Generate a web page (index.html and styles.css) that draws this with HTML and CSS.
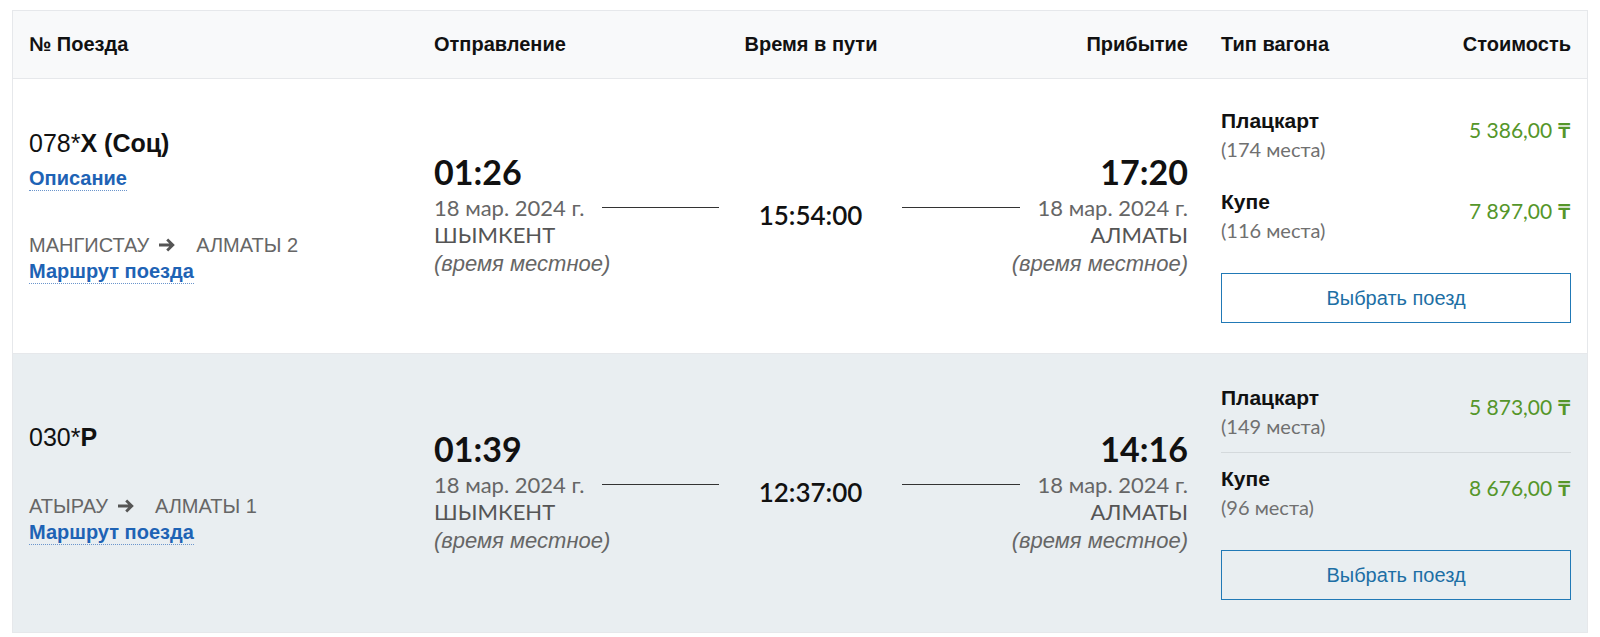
FILE: index.html
```html
<!DOCTYPE html>
<html lang="ru">
<head>
    <meta charset="UTF-8">
    <meta name="viewport" content="width=device-width, initial-scale=1.0">
    <title>Поезда</title>
    <link rel="stylesheet" href="styles.css">
</head>
<body>
    <div class="trains">
        <div class="trains-head">
            <div>№ Поезда</div>
            <div class="head-trip">
                <span>Отправление</span>
                <span class="center">Время в пути</span>
                <span class="right">Прибытие</span>
            </div>
            <div class="head-cars">
                <span>Тип вагона</span>
                <span>Стоимость</span>
            </div>
        </div>

        <div class="train-row">
            <div class="train-info">
                <div class="train-top">
                    <div class="train-number">078*<b>X (Соц)</b></div>
                    <a class="dotted" href="#">Описание</a>
                </div>
                <div class="route">
                    МАНГИСТАУ
                    <svg class="arrow" viewBox="0 0 16 14" width="16" height="14"><path d="M0 7H14M8.2 1.6L13.8 7L8.2 12.4" fill="none" stroke="#555" stroke-width="2.8"/></svg>
                    АЛМАТЫ 2
                </div>
                <a class="dotted" href="#">Маршрут поезда</a>
            </div>
            <div class="trip">
                <div class="trip-pair">
                    <span class="time">01:26</span>
                    <span class="time">17:20</span>
                </div>
                <div class="trip-line">
                    <span class="date">18 мар. 2024 г.</span>
                    <span class="line line-left"></span>
                    <span class="duration">15:54:00</span>
                    <span class="line line-right"></span>
                    <span class="date">18 мар. 2024 г.</span>
                </div>
                <div class="trip-pair place">
                    <span>ШЫМКЕНТ</span>
                    <span>АЛМАТЫ</span>
                </div>
                <div class="trip-pair note">
                    <span>(время местное)</span>
                    <span>(время местное)</span>
                </div>
            </div>
            <div class="cars">
                <div class="car">
                    <div>
                        <div class="car-type">Плацкарт</div>
                        <div class="car-seats">(174 места)</div>
                    </div>
                    <div class="car-price">5 386,00 <span class="tenge">₸</span></div>
                </div>
                <div class="car">
                    <div>
                        <div class="car-type">Купе</div>
                        <div class="car-seats">(116 места)</div>
                    </div>
                    <div class="car-price">7 897,00 <span class="tenge">₸</span></div>
                </div>
                <button class="select-btn">Выбрать поезд</button>
            </div>
        </div>

        <div class="train-row alt">
            <div class="train-info">
                <div class="train-top">
                    <div class="train-number">030*<b>P</b></div>
                </div>
                <div class="route">
                    АТЫРАУ
                    <svg class="arrow" viewBox="0 0 16 14" width="16" height="14"><path d="M0 7H14M8.2 1.6L13.8 7L8.2 12.4" fill="none" stroke="#555" stroke-width="2.8"/></svg>
                    АЛМАТЫ 1
                </div>
                <a class="dotted" href="#">Маршрут поезда</a>
            </div>
            <div class="trip">
                <div class="trip-pair">
                    <span class="time">01:39</span>
                    <span class="time">14:16</span>
                </div>
                <div class="trip-line">
                    <span class="date">18 мар. 2024 г.</span>
                    <span class="line line-left"></span>
                    <span class="duration">12:37:00</span>
                    <span class="line line-right"></span>
                    <span class="date">18 мар. 2024 г.</span>
                </div>
                <div class="trip-pair place">
                    <span>ШЫМКЕНТ</span>
                    <span>АЛМАТЫ</span>
                </div>
                <div class="trip-pair note">
                    <span>(время местное)</span>
                    <span>(время местное)</span>
                </div>
            </div>
            <div class="cars">
                <div class="car split">
                    <div>
                        <div class="car-type">Плацкарт</div>
                        <div class="car-seats">(149 места)</div>
                    </div>
                    <div class="car-price">5 873,00 <span class="tenge">₸</span></div>
                </div>
                <div class="car">
                    <div>
                        <div class="car-type">Купе</div>
                        <div class="car-seats">(96 места)</div>
                    </div>
                    <div class="car-price">8 676,00 <span class="tenge">₸</span></div>
                </div>
                <button class="select-btn">Выбрать поезд</button>
            </div>
        </div>
    </div>
</body>
</html>
```

FILE: styles.css
```css
body {
    margin: 0;
    background: #fff;
    font-family: "Liberation Sans", Arial, sans-serif;
    color: #111;
}
.trains {
    margin: 10px 12px 0;
    border: 1px solid #e6e8eb;
}
.trains-head,
.train-row {
    display: grid;
    grid-template-columns: 405px 754px 1fr;
    padding: 0 16px;
}
.trains-head {
    height: 67px;
    align-items: center;
    background: #f8f9fa;
    font-weight: bold;
    font-size: 20px;
}
.head-trip {
    display: grid;
    grid-template-columns: 1fr auto 1fr;
}
.head-trip .center {
    text-align: center;
}
.head-trip .right {
    text-align: right;
}
.head-cars {
    display: flex;
    justify-content: space-between;
    padding-left: 33px;
}
.train-row {
    padding: 16px 16px 30px;
    border-top: 1px solid #e6e8eb;
    align-items: center;
}
.train-row.alt {
    padding: 18px 16px 32px;
    background: #e9eef1;
}

/* left column */
.train-info {
    margin-bottom: 6px;
}
.train-top {
    margin-bottom: 42px;
}
.train-number {
    font-size: 25px;
    line-height: 30px;
}
.train-number b {
    font-weight: bold;
}
.dotted {
    display: inline-block;
    margin-top: 8px;
    font-size: 20px;
    line-height: 24px;
    font-weight: bold;
    color: #1e63b5;
    text-decoration: none;
    border-bottom: 1px dotted #6b95cc;
}
.route + .dotted {
    margin-top: 2px;
}
.route {
    display: flex;
    align-items: center;
    font-size: 20px;
    line-height: 24px;
    color: #666;
}
.arrow {
    margin: 0 21px 0 10px;
}

/* trip */
.trip {
    padding-top: 12px;
    font-family: Lato, "Liberation Sans", sans-serif;
}
.trip-pair {
    display: flex;
    justify-content: space-between;
}
.time {
    font-size: 34px;
    font-weight: bold;
    line-height: 40px;
    color: #111;
}
.trip-line {
    display: flex;
    align-items: center;
    height: 27px;
    margin-top: 2px;
}
.date {
    font-size: 22px;
    line-height: 27px;
    color: #666;
}
.line {
    flex: 1;
    height: 1px;
    background: #333;
}
.line-left {
    margin: 0 40px 0 17px;
}
.line-right {
    margin: 0 18px 0 40px;
}
.duration {
    margin-top: 15px;
    font-size: 26px;
    font-weight: 600;
    line-height: 27px;
    color: #111;
}
.place {
    font-size: 22px;
    line-height: 27px;
    color: #555;
}
.note {
    margin-top: 2px;
    font-family: "Liberation Sans", Arial, sans-serif;
    font-size: 22px;
    line-height: 28px;
    font-style: italic;
    color: #666;
}

/* cars */
.cars {
    padding-left: 33px;
}
.car {
    display: flex;
    justify-content: space-between;
    align-items: center;
    padding: 12px 0;
    border-bottom: 1px solid transparent;
}
.car.split {
    border-bottom-color: #d4d9dc;
}
.car-type {
    font-size: 21px;
    font-weight: bold;
    line-height: 28px;
}
.car-seats {
    font-family: Lato, "Liberation Sans", sans-serif;
    font-size: 20px;
    line-height: 28px;
    color: #707070;
}
.car-price {
    font-family: Lato, "Liberation Sans", sans-serif;
    font-size: 21px;
    color: #55962a;
    margin-bottom: 12px;
}
.tenge {
    font-weight: bold;
}
.select-btn {
    display: block;
    width: 100%;
    height: 50px;
    margin-top: 16px;
    background: transparent;
    border: 1px solid #2179b6;
    color: #1d6fa5;
    font-family: "Liberation Sans", Arial, sans-serif;
    font-size: 20px;
    cursor: pointer;
}
```
